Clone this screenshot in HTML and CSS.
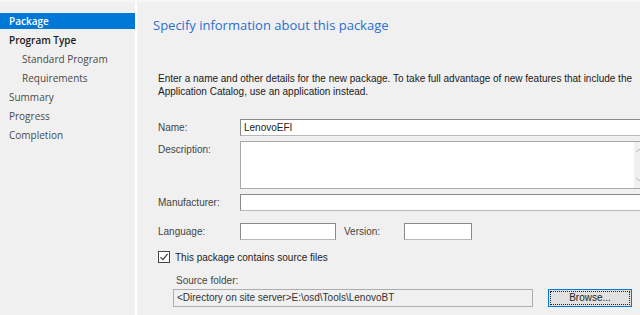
FILE: index.html
```html
<!DOCTYPE html>
<html lang="en">
<head>
  <meta charset="UTF-8" />
  <title>Create Package and Program Wizard</title>
  <link rel="stylesheet" href="styles.css">
</head>
<body>
  <div class="wizard">

    <!-- Step list -->
    <nav class="steps">
      <div class="step active">Package</div>
      <div class="step group">Program Type</div>
      <div class="step sub">Standard Program</div>
      <div class="step sub">Requirements</div>
      <div class="step">Summary</div>
      <div class="step">Progress</div>
      <div class="step">Completion</div>
    </nav>

    <main class="page">
      <h1>Specify information about this package</h1>

      <p class="intro">Enter a name and other details for the new package. To take full advantage of new features that include the Application Catalog, use an application instead.</p>

      <div class="form">
        <label class="lbl">Name:</label>
        <div class="field wide">LenovoEFI</div>

        <label class="lbl top">Description:</label>
        <div class="field wide memo">
          <div class="scroll">
            <svg width="7" height="5" viewBox="0 0 7 5"><path d="M0.5 4 L3.5 1 L6.5 4" fill="none" stroke="#a6a6a6" stroke-width="1"/></svg>
            <svg width="7" height="5" viewBox="0 0 7 5"><path d="M0.5 1 L3.5 4 L6.5 1" fill="none" stroke="#a6a6a6" stroke-width="1"/></svg>
          </div>
        </div>

        <label class="lbl">Manufacturer:</label>
        <div class="field wide"></div>

        <label class="lbl lang">Language:</label>
        <div class="pair lang">
          <div class="field small"></div>
          <label class="lbl ver">Version:</label>
          <div class="field tiny"></div>
        </div>
      </div>

      <div class="check-row">
        <span class="checkbox">
          <svg width="10" height="10" viewBox="0 0 10 10"><path d="M1.5 5.2 L4 7.6 L8.6 1.8" fill="none" stroke="#333" stroke-width="1.1"/></svg>
        </span>
        <span>This package contains source files</span>
      </div>

      <div class="source">
        <div class="src-label">Source folder:</div>
        <div class="src-row">
          <div class="field readonly">&lt;Directory on site server&gt;E:\osd\Tools\LenovoBT</div>
          <button class="browse"><span>Browse...</span></button>
        </div>
      </div>
    </main>

  </div>
</body>
</html>
```

FILE: styles.css
```css
body {
  margin: 0;
  width: 640px;
  height: 315px;
  overflow: hidden;
  background-color: #f0f0f0;
  font-family: 'Liberation Sans', Arial, sans-serif;
  font-size: 10px;
  color: #333;
}

.wizard {
  display: flex;
  height: 315px;
  border-top: 2px solid #f7f7f7;
  box-sizing: border-box;
}

/* Left step list */
.steps {
  width: 135px;
  flex-shrink: 0;
  padding-top: 11px;
  border-right: 2px solid #ffffff;
  font-family: 'Open Sans', 'Noto Sans', sans-serif;
  font-size: 10px;
  color: #4a4a4a;
}

.step {
  height: 19px;
  line-height: 16px;
  padding-left: 9px;
}

.step.active {
  background-color: #0078d7;
  color: #ffffff;
  font-weight: 600;
  height: 16px;
  margin-bottom: 3px;
}

.step.group {
  color: #1a1a1a;
  font-weight: 600;
}

.step.sub {
  padding-left: 22px;
}

/* Right page */
.page {
  flex: 1;
  padding-left: 21px;
  overflow: hidden;
}

h1 {
  margin: 13px 0 0 -5px;
  font-family: 'Open Sans', 'Noto Sans', sans-serif;
  font-weight: normal;
  font-size: 13px;
  color: #2a6fd0;
  line-height: 20px;
}

.intro {
  margin: 37px 0 0 0;
  width: 482px;
  line-height: 13px;
  color: #1a1a1a;
}

.form {
  display: grid;
  grid-template-columns: 82px 1fr;
  row-gap: 5px;
  margin-top: 21px;
}

.lbl {
  display: flex;
  align-items: center;
  color: #444;
}

.lbl.top {
  align-items: flex-start;
  padding-top: 3px;
}

.lang {
  margin-top: 7px;
}

.field {
  box-sizing: border-box;
  height: 17px;
  background-color: #ffffff;
  border: 1px solid #8a8a8a;
  border-bottom-color: #b8b8b8;
  padding: 2px 3px;
  line-height: 11px;
  color: #222;
}

.field.wide {
  width: 420px;
}

.field.memo {
  height: 48px;
  border-color: #a8a8a8;
  position: relative;
}

/* vertical scrollbar of the description box */
.scroll {
  position: absolute;
  top: 0;
  bottom: 0;
  left: 393px;
  width: 17px;
  background-color: #f0f0f0;
  display: flex;
  flex-direction: column;
  justify-content: space-between;
  padding: 6px 0 6px 2px;
  box-sizing: border-box;
}

.pair {
  display: flex;
  align-items: center;
}

.field.small {
  width: 96px;
}

.lbl.ver {
  width: 68px;
  padding-left: 8px;
  box-sizing: border-box;
}

.field.tiny {
  width: 68px;
}

.check-row {
  display: flex;
  align-items: center;
  gap: 5px;
  margin-top: 11px;
  color: #222;
}

.checkbox {
  width: 10px;
  height: 10px;
  border: 1px solid #444;
  background-color: #ffffff;
  display: flex;
}

.source {
  padding-left: 15px;
}

.src-label {
  margin-top: 12px;
  padding-left: 3px;
  color: #444;
}

.src-row {
  display: flex;
  align-items: center;
  margin-top: 3px;
}

.field.readonly {
  width: 360px;
  height: 18px;
  background-color: #f0f0f0;
  border-color: #adadad;
  color: #333;
}

.browse {
  margin-left: 15px;
  width: 84px;
  height: 18px;
  padding: 1px;
  background-color: #e1e1e1;
  border: 1px solid #0078d7;
  font-family: 'Liberation Sans', Arial, sans-serif;
  font-size: 10px;
  color: #222;
  cursor: pointer;
}

.browse span {
  display: block;
  height: 100%;
  box-sizing: border-box;
  border: 1px dotted #222;
  line-height: 12px;
}
```
